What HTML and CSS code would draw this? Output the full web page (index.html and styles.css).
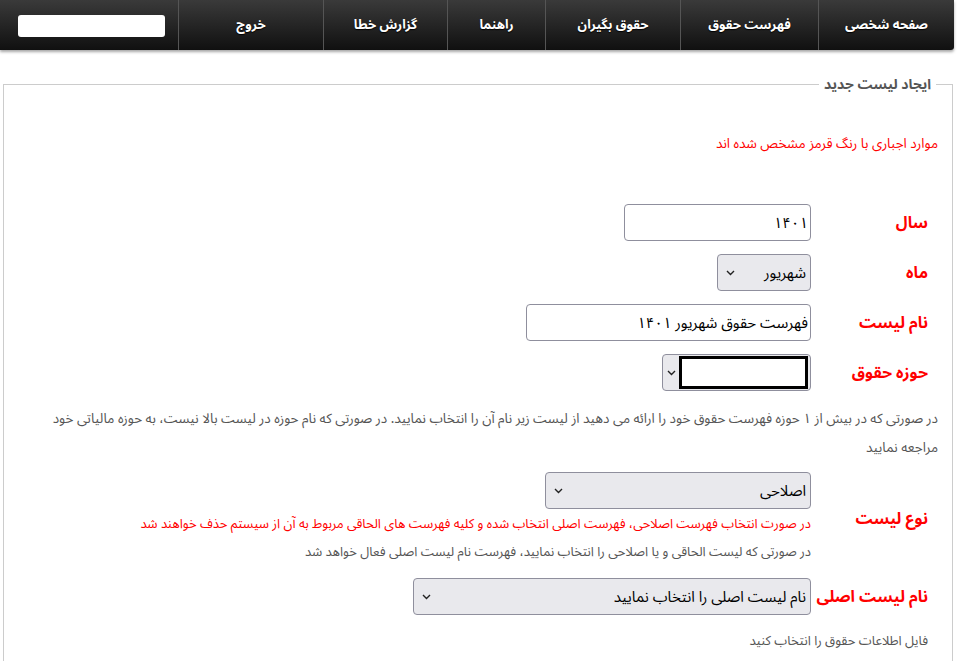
FILE: index.html
```html
<!DOCTYPE html>
<html lang="fa" dir="rtl">
<head>
  <meta charset="UTF-8" />
  <meta name="viewport" content="width=device-width, initial-scale=1.0"/>
  <title>ایجاد لیست جدید</title>
  <link rel="stylesheet" href="styles.css">
</head>
<body>
  <nav class="topbar">
    <ul class="menu">
      <li class="m-profile"><a href="#">صفحه شخصی</a></li>
      <li class="m-list"><a href="#">فهرست حقوق</a></li>
      <li class="m-people"><a href="#">حقوق بگیران</a></li>
      <li class="m-help"><a href="#">راهنما</a></li>
      <li class="m-report"><a href="#">گزارش خطا</a></li>
      <li class="m-exit"><a href="#">خروج</a></li>
      <li class="m-user"><span class="user-box"></span></li>
    </ul>
  </nav>

  <fieldset class="panel">
    <legend>ایجاد لیست جدید</legend>

    <p class="required-note">موارد اجباری با رنگ قرمز مشخص شده اند</p>

    <table class="form-table">
      <tr>
        <td class="label">سال</td>
        <td class="field"><input type="text" class="w-year" value="۱۴۰۱" /></td>
      </tr>
      <tr>
        <td class="label">ماه</td>
        <td class="field">
          <div class="select-wrap">
            <select class="w-month">
              <option>شهریور</option>
            </select>
            <svg class="chevron" width="9" height="6" viewBox="0 0 9 6"><path d="M1 1l3.5 3.5L8 1" fill="none" stroke="#222" stroke-width="1.4"/></svg>
          </div>
        </td>
      </tr>
      <tr>
        <td class="label">نام لیست</td>
        <td class="field"><input type="text" class="w-name" value="فهرست حقوق شهریور ۱۴۰۱" /></td>
      </tr>
      <tr>
        <td class="label">حوزه حقوق</td>
        <td class="field">
          <div class="select-wrap">
            <select class="w-zone">
              <option></option>
            </select>
            <svg class="chevron narrow" width="9" height="6" viewBox="0 0 9 6"><path d="M1 1l3.5 3.5L8 1" fill="none" stroke="#222" stroke-width="1.4"/></svg>
            <span class="hidden-box"></span>
          </div>
        </td>
      </tr>
      <tr>
        <td colspan="2" class="hint">در صورتی که در بیش از ۱ حوزه فهرست حقوق خود را ارائه می دهید از لیست زیر نام آن را انتخاب نمایید. در صورتی که نام حوزه در لیست بالا نیست، به حوزه مالیاتی خود مراجعه نمایید</td>
      </tr>
      <tr>
        <td class="label">نوع لیست</td>
        <td class="field">
          <div class="select-wrap">
            <select class="w-type">
              <option>اصلاحی</option>
            </select>
            <svg class="chevron" width="9" height="6" viewBox="0 0 9 6"><path d="M1 1l3.5 3.5L8 1" fill="none" stroke="#222" stroke-width="1.4"/></svg>
          </div>
          <div class="warn">در صورت انتخاب فهرست اصلاحی، فهرست اصلی انتخاب شده و کلیه فهرست های الحاقی مربوط به آن از سیستم حذف خواهند شد</div>
          <div class="note">در صورتی که لیست الحاقی و یا اصلاحی را انتخاب نمایید، فهرست نام لیست اصلی فعال خواهد شد</div>
        </td>
      </tr>
      <tr>
        <td class="label">نام لیست اصلی</td>
        <td class="field">
          <div class="select-wrap">
            <select class="w-main">
              <option>نام لیست اصلی را انتخاب نمایید</option>
            </select>
            <svg class="chevron" width="9" height="6" viewBox="0 0 9 6"><path d="M1 1l3.5 3.5L8 1" fill="none" stroke="#222" stroke-width="1.4"/></svg>
          </div>
        </td>
      </tr>
    </table>

    <p class="file-note">فایل اطلاعات حقوق را انتخاب کنید</p>
  </fieldset>
</body>
</html>
```

FILE: styles.css
```css
body {
  margin: 0;
  font-family: "Noto Sans Arabic", "DejaVu Sans", sans-serif;
  background: #fff;
  color: #333;
  direction: rtl;
}

.topbar {
  width: 954px;
  height: 50px;
  margin-left: 0;
  margin-right: auto;
  background: linear-gradient(to bottom, #3a3a3a, #101010);
  box-shadow: 0 2px 3px rgba(0, 0, 0, 0.35);
  border-bottom-right-radius: 3px;
}

.menu {
  display: flex;
  height: 100%;
  margin: 0;
  padding: 0;
  list-style: none;
}

.menu li {
  display: flex;
  align-items: center;
  justify-content: center;
  border-left: 1px solid #555;
}

.menu a {
  color: #fff;
  font-size: 13px;
  font-weight: bold;
  text-decoration: none;
  text-shadow: 0 1px 1px #000;
}

.m-profile { width: 135px; }
.m-list { width: 137px; }
.m-people { width: 134px; }
.m-help { width: 97px; }
.m-report { width: 123px; }
.m-exit { width: 144px; }

.menu .m-user {
  flex: 1;
  border-left: none;
  justify-content: flex-end;
  padding-left: 18px;
}

.user-box {
  display: block;
  width: 147px;
  height: 22px;
  margin-top: 2px;
  background: #fff;
  border-radius: 3px;
}

.panel {
  margin: 20px 6px 0 3px;
  padding: 0 14px 20px 14px;
  border: 1px solid #ccc;
  border-bottom: none;
}

.panel legend {
  padding: 0 5px;
  margin-right: 2px;
  font-size: 14px;
  font-weight: bold;
  color: #555;
}

.required-note {
  margin: 30px 0 0;
  font-size: 13.5px;
  color: #f00;
}

.form-table {
  margin-top: 40px;
  border-collapse: collapse;
}

.form-table td {
  padding: 6px 0 7px;
}

.form-table .label {
  width: 117px;
  padding-right: 10px;
  font-size: 16px;
  font-weight: bold;
  color: #f00;
  vertical-align: middle;
}

.form-table .field {
  vertical-align: top;
}

input,
select {
  box-sizing: border-box;
  height: 37px;
  font-family: inherit;
  font-size: 15px;
  color: #000;
  border: 1px solid #8f8f9d;
  border-radius: 4px;
}

input {
  padding: 0 2px;
  background: #fff;
}

select {
  appearance: none;
  -webkit-appearance: none;
  padding: 0 4px;
  background-color: #e9e9ed;
}

.w-year { width: 187px; }
.w-month { width: 94px; }
.w-name { width: 285px; }
.w-zone { width: 149px; }
.w-type { width: 266px; }
.w-main { width: 398px; }

.select-wrap {
  position: relative;
  display: inline-block;
  vertical-align: top;
}

.chevron {
  position: absolute;
  left: 9px;
  top: 16px;
  pointer-events: none;
}

.chevron.narrow {
  left: 5px;
}

.hidden-box {
  position: absolute;
  top: 2px;
  right: 3px;
  width: 123px;
  height: 27px;
  background: #fff;
  border: 3px solid #000;
}

.form-table .hint {
  padding: 6px 0 4px 20px;
  font-size: 13.5px;
  line-height: 29px;
  color: #555;
}

.warn {
  margin-top: 5px;
  font-size: 13px;
  line-height: 20px;
  color: #f00;
}

.note {
  margin: 8px 0 3px;
  font-size: 13px;
  line-height: 20px;
  color: #555;
}

.file-note {
  margin: 5px 10px 0 0;
  font-size: 13px;
  color: #555;
}
```
